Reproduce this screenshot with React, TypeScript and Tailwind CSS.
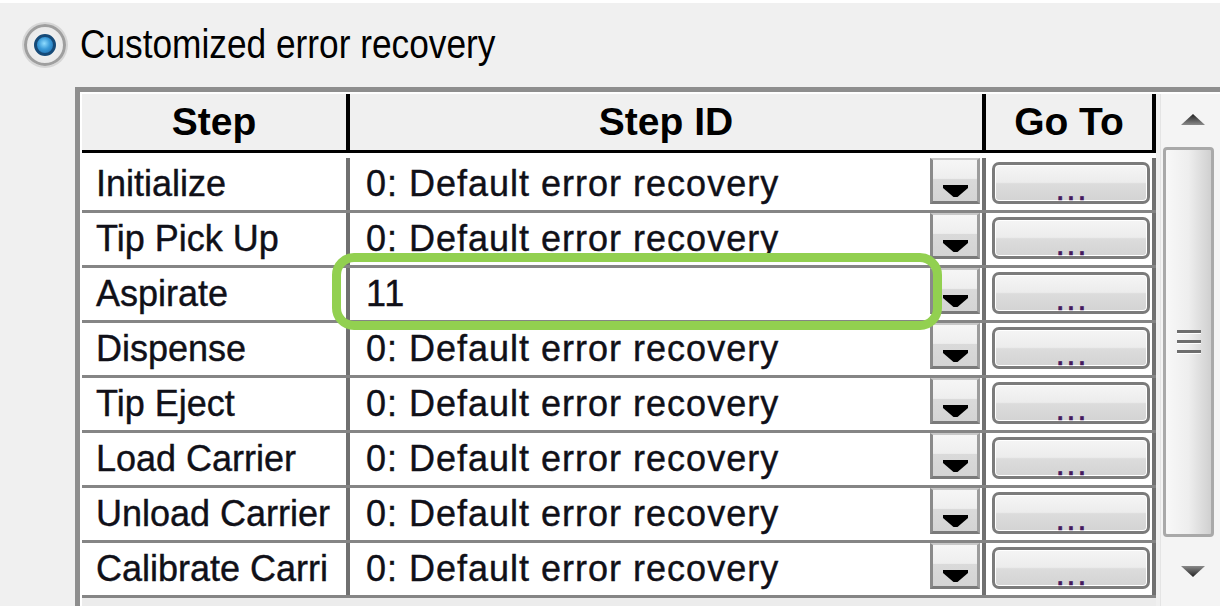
import React from "react";

const rows: [string, string][] = [
  ["Initialize", "0: Default error recovery"],
  ["Tip Pick Up", "0: Default error recovery"],
  ["Aspirate", "11"],
  ["Dispense", "0: Default error recovery"],
  ["Tip Eject", "0: Default error recovery"],
  ["Load Carrier", "0: Default error recovery"],
  ["Unload Carrier", "0: Default error recovery"],
  ["Calibrate Carri", "0: Default error recovery"],
];

function DropButton() {
  return (
    <div className="w-[50px] h-[46px] mr-[2px] shrink-0 border-l-[3px] border-t-[2px] border-r-[3px] border-b-[3px] border-l-[#8a8a8a] border-t-[#c8c8c8] border-r-[#9c9c9c] border-b-[#7a7a7a] bg-[linear-gradient(to_bottom,#f6f6f6_0%,#eeeeee_45%,#dadada_46%,#d4d4d4_100%)] flex items-end justify-center pb-[4px]">
      <svg width="25" height="12" viewBox="0 0 25 12">
        <polygon points="0,0 25,0 25,3 14.5,12 10.5,12 0,3" fill="#000" />
      </svg>
    </div>
  );
}

function GoButton() {
  return (
    <div className="mt-[4px] w-[158px] h-[42px] rounded-[7px] border-[3px] border-[#7b7b7b] shadow-[inset_0_0_0_1px_#ffffff] bg-[linear-gradient(to_bottom,#f5f5f5_0%,#ececec_48%,#dcdcdc_52%,#d3d3d3_100%)] flex items-end justify-center pb-[1px]">
      <span className="text-[32px] leading-[21px] text-[#44195e] tracking-[2px] pl-[2px] [-webkit-text-stroke:0.6px_#44195e]">...</span>
    </div>
  );
}

export default function App() {
  return (
    <div className="relative w-[1220px] h-[606px] overflow-hidden bg-[#f0f0f0] font-['Liberation_Sans',Arial,sans-serif] text-[#101018]">
      <div className="h-[3px] bg-white" />
      {/* radio line */}
      <div className="h-[84px] flex items-center pl-[24px] gap-[14px]">
        <div className="w-[42px] h-[42px] shrink-0 rounded-full border-[3px] border-[#9f9f9f] bg-[radial-gradient(circle,#f7f7f7_0%,#e4e4e4_100%)] flex items-center justify-center shadow-[0_0_0_2px_#d6d6d6]">
          <div className="w-[22px] h-[22px] rounded-full border-[3px] border-[#164a78] bg-[radial-gradient(circle_at_45%_40%,#8fdcff_0%,#3a9ad8_45%,#1a66a8_100%)]" />
        </div>
        <span className="block origin-left scale-x-[0.86] text-[41px] leading-none text-black mt-[-2px] whitespace-nowrap">
          Customized error recovery
        </span>
      </div>

      {/* frame */}
      <div className="ml-[75px] h-[519px] border-l-[5px] border-t-[5px] border-[#8e8e8e]">
        <div className="h-full border-l-[2px] border-t-[2px] border-white flex">
          <div className="w-[1074px] shrink-0 flex flex-col bg-[#ececec]">
            <div className="h-[59px] flex border-b-[3px] border-black bg-[#f0f0f0] font-bold text-[39px] text-black">
              <div className="w-[268px] border-r-[4px] border-black flex items-center justify-center">Step</div>
              <div className="w-[636px] border-r-[4px] border-black flex items-center justify-center">Step ID</div>
              <div className="w-[170px] border-r-[4px] border-black flex items-center justify-center">Go To</div>
            </div>
            {rows.map(([step, id], i) => (
              <div
                key={step}
                className={`${i === 0 ? "h-[60px] pt-[5px]" : "h-[55px]"} flex border-b-[3px] border-[#858585] bg-white text-[36px] [-webkit-text-stroke:0.4px_#101018]`}
              >
                <div className="w-[268px] border-r-[4px] border-[#707070] flex items-center pl-[14px] leading-none whitespace-nowrap overflow-hidden">
                  {step}
                </div>
                <div className="w-[636px] border-r-[4px] border-[#707070] flex items-start">
                  <span className="self-center pl-[16px] leading-none whitespace-nowrap tracking-[1px]">{id}</span>
                  <div className="ml-auto">
                    <DropButton />
                  </div>
                </div>
                <div className="w-[170px] border-r-[4px] border-[#707070] pl-[6px]">
                  <GoButton />
                </div>
              </div>
            ))}
          </div>
          <div className="w-[4px] shrink-0 bg-[#f0f0f0]" />
          {/* scrollbar */}
          <div className="flex-1 flex flex-col bg-[#f4f4f4] border-l border-[#e4e4e4]">
            <div className="h-[52px] flex items-center justify-center pl-[4px]">
              <svg width="24" height="11" viewBox="0 0 24 11">
                <defs>
                  <linearGradient id="ga" x1="0" y1="0" x2="0" y2="1">
                    <stop offset="0" stopColor="#202020" />
                    <stop offset="1" stopColor="#8a8a8a" />
                  </linearGradient>
                </defs>
                <polygon points="12,0 24,11 0,11" fill="url(#ga)" />
              </svg>
            </div>
            <div className="mt-[2px] ml-[2px] w-[51px] h-[394px] rounded-[4px] border-[3px] border-[#a9a9a9] bg-linear-to-r from-[#f8f8f8] via-[#eeeeee] to-[#d0d0d0] flex flex-col items-center justify-center gap-[6px]">
              <div className="w-[24px] h-[4px] bg-[#6e6e6e] border-b border-white" />
              <div className="w-[24px] h-[4px] bg-[#6e6e6e] border-b border-white" />
              <div className="w-[24px] h-[4px] bg-[#6e6e6e] border-b border-white" />
            </div>
            <div className="h-[70px] flex items-center justify-center pl-[4px]">
              <svg width="24" height="11" viewBox="0 0 24 11">
                <defs>
                  <linearGradient id="gb" x1="0" y1="0" x2="0" y2="1">
                    <stop offset="0" stopColor="#8a8a8a" />
                    <stop offset="1" stopColor="#202020" />
                  </linearGradient>
                </defs>
                <polygon points="0,0 24,0 12,11" fill="url(#gb)" />
              </svg>
            </div>
          </div>
        </div>
      </div>

      {/* green highlight */}
      <div className="absolute left-[332px] top-[253px] w-[610px] h-[77px] border-[9px] border-[#92d050] rounded-[22px]" />
    </div>
  );
}
